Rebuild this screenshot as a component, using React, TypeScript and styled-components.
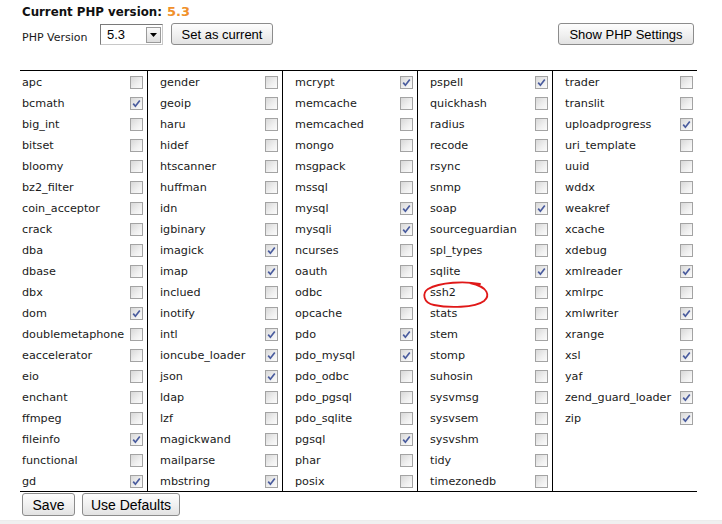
import styled, { createGlobalStyle } from 'styled-components';

interface Ext {
  name: string;
  on?: boolean;
}

const GlobalStyle = createGlobalStyle`
  html, body {
    margin: 0;
    padding: 0;
    background: #ffffff;
  }
  #root {
    min-height: 100vh;
    display: flex;
    flex-direction: column;
  }
`;

const Page = styled.div`
  flex: 1;
  display: flex;
  flex-direction: column;
  font-family: 'DejaVu Sans', Verdana, sans-serif;
  color: #1a1a1a;
`;

const Main = styled.div`
  padding: 0 25px 0 20px;
  position: relative;
`;

const Title = styled.div`
  height: 18px;
  padding: 3px 0 0 2px;
  font-weight: bold;
  font-size: 11.8px;
  line-height: 18px;
  color: #111;
`;

const Version = styled.span`
  color: #f0902a;
  font-size: 13px;
  margin-left: 5px;
`;

const Controls = styled.div`
  margin-top: 2px;
  height: 22px;
  display: flex;
  justify-content: space-between;
  align-items: center;
  padding-right: 3px;
`;

const ControlGroup = styled.div`
  display: flex;
  align-items: center;
`;

const Label = styled.span`
  font-size: 11px;
  padding: 6px 0 0 2px;
  width: 78px;
`;

const FakeSelect = styled.div`
  box-sizing: border-box;
  width: 63px;
  height: 21px;
  border: 1px solid #7a7a7a;
  border-right-color: #c8c8c8;
  border-bottom-color: #c8c8c8;
  display: flex;
  align-items: center;
  justify-content: space-between;
  padding: 0 1px 0 6px;
  font-family: 'Liberation Sans', Arial, sans-serif;
  font-size: 13px;
  color: #000;
  margin-top: 1px;
`;

const Arrow = styled.div`
  box-sizing: border-box;
  width: 15px;
  height: 16px;
  border: 1px solid #9a9a9a;
  background: linear-gradient(#fafafa, #dedede);
  display: flex;
  align-items: center;
  justify-content: center;
`;

const Button = styled.button<{ $w: number; $h?: number; $size?: number }>`
  box-sizing: border-box;
  width: ${p => p.$w}px;
  height: ${p => p.$h ?? 22}px;
  padding: 0;
  border: 1px solid #8c8c8c;
  border-radius: 3px;
  background: linear-gradient(#fdfdfd, #f1f1f1 50%, #e2e2e2);
  font-family: 'Liberation Sans', Arial, sans-serif;
  font-size: ${p => p.$size ?? 13}px;
  color: #000;
  margin-left: ${p => (p.$w > 120 ? 0 : 8)}px;
`;

const Table = styled.div`
  margin-top: 25px;
  display: grid;
  grid-template-columns: 127px 135px 135px 135px 145px;
  border-top: 1px solid #000;
  border-bottom: 1px solid #000;
`;

const Column = styled.div<{ $first?: boolean }>`
  border-left: ${p => (p.$first ? 'none' : '1px solid #000')};
  padding-left: ${p => (p.$first ? 2 : 12)}px;
  padding-right: 4px;
`;

const Row = styled.div`
  box-sizing: border-box;
  height: 21px;
  padding-top: 1px;
  display: flex;
  align-items: center;
  justify-content: space-between;
  font-size: 11.2px;
`;

const Box = styled.span<{ $on?: boolean }>`
  box-sizing: border-box;
  width: 13px;
  height: 13px;
  border: 1px solid #a3a3a3;
  background: linear-gradient(135deg, #d8d8d8, #f0f0f0 60%, #fbfbfb);
  display: flex;
  align-items: center;
  justify-content: center;
`;

const Actions = styled.div`
  margin-top: 1px;
  padding-left: 2px;
  display: flex;
  gap: 7px;

  & > button {
    margin-left: 0;
  }
`;

const Mark = styled.svg`
  position: absolute;
  left: 420px;
  top: 279px;
  overflow: visible;
  pointer-events: none;
`;

const Bottom = styled.div`
  flex: 1;
  margin-top: 4px;
  background: #f0f0f0;
  border-top: 1px solid #ececec;
`;

const columns: Ext[][] = [
  [
    { name: 'apc' }, { name: 'bcmath', on: true }, { name: 'big_int' }, { name: 'bitset' },
    { name: 'bloomy' }, { name: 'bz2_filter' }, { name: 'coin_acceptor' }, { name: 'crack' },
    { name: 'dba' }, { name: 'dbase' }, { name: 'dbx' }, { name: 'dom', on: true },
    { name: 'doublemetaphone' }, { name: 'eaccelerator' }, { name: 'eio' }, { name: 'enchant' },
    { name: 'ffmpeg' }, { name: 'fileinfo', on: true }, { name: 'functional' }, { name: 'gd', on: true },
  ],
  [
    { name: 'gender' }, { name: 'geoip' }, { name: 'haru' }, { name: 'hidef' },
    { name: 'htscanner' }, { name: 'huffman' }, { name: 'idn' }, { name: 'igbinary' },
    { name: 'imagick', on: true }, { name: 'imap', on: true }, { name: 'inclued' }, { name: 'inotify' },
    { name: 'intl', on: true }, { name: 'ioncube_loader', on: true }, { name: 'json', on: true }, { name: 'ldap' },
    { name: 'lzf' }, { name: 'magickwand' }, { name: 'mailparse' }, { name: 'mbstring', on: true },
  ],
  [
    { name: 'mcrypt', on: true }, { name: 'memcache' }, { name: 'memcached' }, { name: 'mongo' },
    { name: 'msgpack' }, { name: 'mssql' }, { name: 'mysql', on: true }, { name: 'mysqli', on: true },
    { name: 'ncurses' }, { name: 'oauth' }, { name: 'odbc' }, { name: 'opcache' },
    { name: 'pdo', on: true }, { name: 'pdo_mysql', on: true }, { name: 'pdo_odbc' }, { name: 'pdo_pgsql' },
    { name: 'pdo_sqlite' }, { name: 'pgsql', on: true }, { name: 'phar' }, { name: 'posix' },
  ],
  [
    { name: 'pspell', on: true }, { name: 'quickhash' }, { name: 'radius' }, { name: 'recode' },
    { name: 'rsync' }, { name: 'snmp' }, { name: 'soap', on: true }, { name: 'sourceguardian' },
    { name: 'spl_types' }, { name: 'sqlite', on: true }, { name: 'ssh2' }, { name: 'stats' },
    { name: 'stem' }, { name: 'stomp' }, { name: 'suhosin' }, { name: 'sysvmsg' },
    { name: 'sysvsem' }, { name: 'sysvshm' }, { name: 'tidy' }, { name: 'timezonedb' },
  ],
  [
    { name: 'trader' }, { name: 'translit' }, { name: 'uploadprogress', on: true }, { name: 'uri_template' },
    { name: 'uuid' }, { name: 'wddx' }, { name: 'weakref' }, { name: 'xcache' },
    { name: 'xdebug' }, { name: 'xmlreader', on: true }, { name: 'xmlrpc' }, { name: 'xmlwriter', on: true },
    { name: 'xrange' }, { name: 'xsl', on: true }, { name: 'yaf' }, { name: 'zend_guard_loader', on: true },
    { name: 'zip', on: true },
  ],
];

const Check = ({ on }: { on?: boolean }) => (
  <Box $on={on}>
    {on && (
      <svg width="9" height="9" viewBox="0 0 9 9">
        <path d="M1.2 4.6 L3.4 7.2 L7.8 1.4" fill="none" stroke="#4a5c9e" strokeWidth="1.7" />
      </svg>
    )}
  </Box>
);

const App = () => {
  return (
    <Page>
      <GlobalStyle />
      <Main>
        <Title>
          Current PHP version:<Version>5.3</Version>
        </Title>
        <Controls>
          <ControlGroup>
            <Label>PHP Version</Label>
            <FakeSelect>
              5.3
              <Arrow>
                <svg width="7" height="4" viewBox="0 0 7 4">
                  <path d="M0 0 H7 L3.5 4 Z" fill="#000" />
                </svg>
              </Arrow>
            </FakeSelect>
            <Button $w={102}>Set as current</Button>
          </ControlGroup>
          <Button $w={136}>Show PHP Settings</Button>
        </Controls>

        <Table>
          {columns.map((col, i) => (
            <Column key={i} $first={i === 0}>
              {col.map(ext => (
                <Row key={ext.name}>
                  {ext.name}
                  <Check on={ext.on} />
                </Row>
              ))}
            </Column>
          ))}
        </Table>

        {/* hand-drawn marker round ssh2 */}
        <Mark width="72" height="32" viewBox="0 0 72 32">
          <path
            d="M60 5 C45 2, 20 3, 8 10 C2 14, 3 24, 14 26 C28 29, 55 29, 64 22 C70 17, 69 8, 50 4"
            fill="none"
            stroke="#e01818"
            strokeWidth="1.8"
            strokeLinecap="round"
          />
        </Mark>

        <Actions>
          <Button $w={53} $h={23} $size={14}>Save</Button>
          <Button $w={98} $h={23} $size={14}>Use Defaults</Button>
        </Actions>
      </Main>
      <Bottom />
    </Page>
  );
};

export default App;
